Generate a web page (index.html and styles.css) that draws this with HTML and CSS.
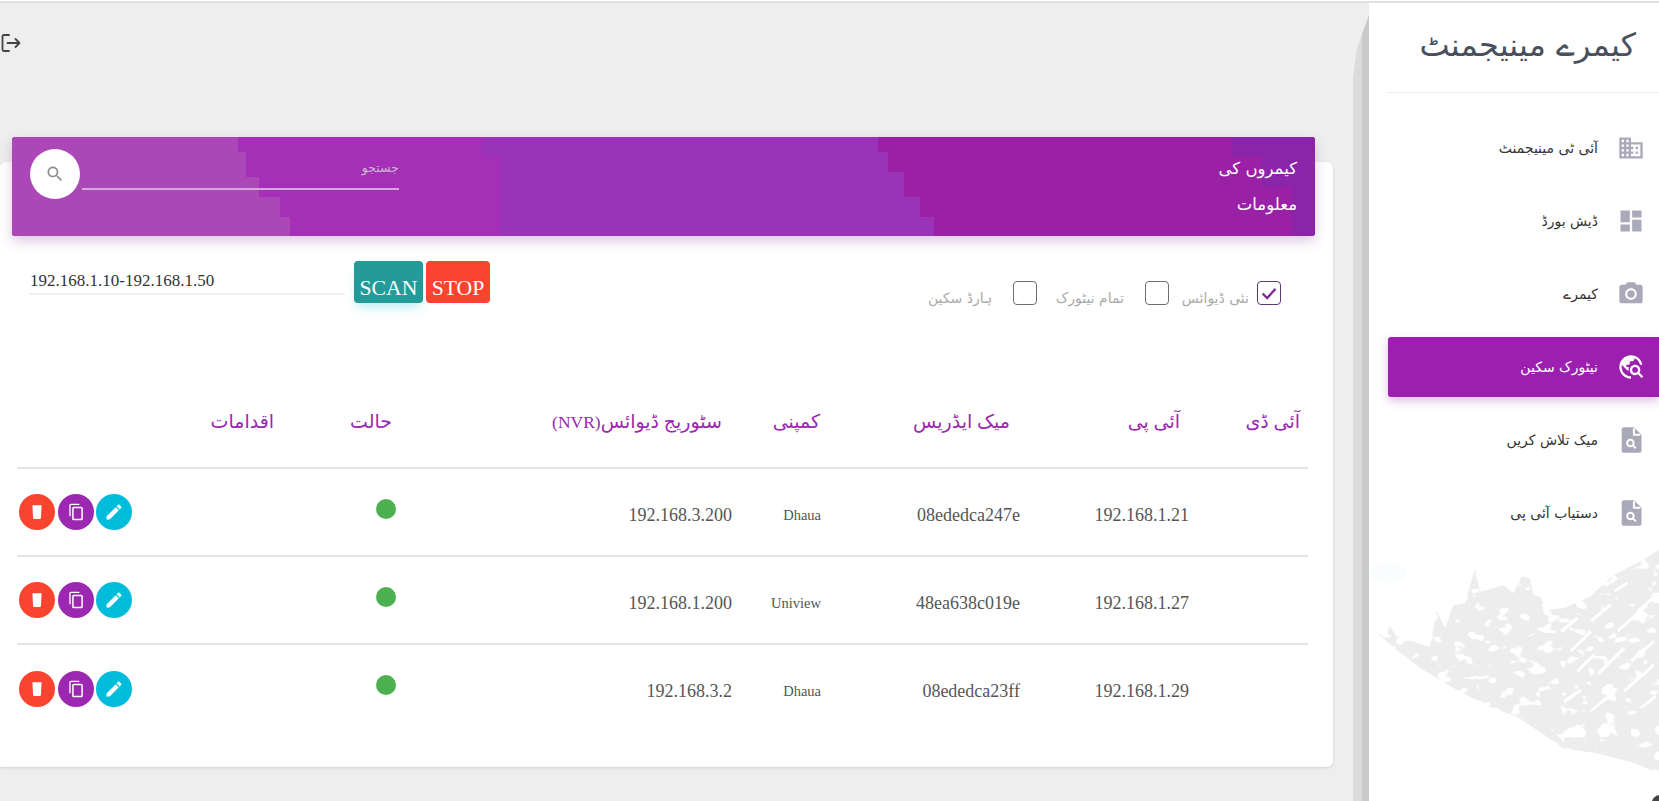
FILE: index.html
```html
<!DOCTYPE html>
<html lang="ur" dir="rtl">
<head>
<meta charset="utf-8">
<title>کیمرے مینیجمنٹ</title>
<link rel="stylesheet" href="styles.css">
</head>
<body>
<svg class="defs" width="0" height="0" aria-hidden="true">
  <filter id="speck" x="0" y="0" width="100%" height="100%">
    <feTurbulence type="fractalNoise" baseFrequency="0.022 0.032" numOctaves="2" seed="7"/>
    <feColorMatrix values="0 0 0 0 0  0 0 0 0 0  0 0 0 0 0  0 0 0 -14 9.400"/>
    <feComposite in="SourceGraphic" operator="in"/>
  </filter>
  <symbol id="i-del" viewBox="0 0 24 24"><path d="M6.500 4h11l-.8 15c0 .9-.6 1.500-1.400 1.500H8.700c-.8 0-1.400-.6-1.400-1.500z"/></symbol>
  <symbol id="i-copy" viewBox="0 0 24 24"><path d="M16 2H6c-1.100 0-2 .9-2 2v13h1.600V3.600H16V2zm2.200 3.600H9.400c-1.100 0-2 .9-2 2V20c0 1.100.9 2 2 2h8.800c1.100 0 2-.9 2-2V7.600c0-1.100-.9-2-2-2zm.2 14.600H9.200V7.400h9.200v12.800z"/></symbol>
  <symbol id="i-edit" viewBox="0 0 24 24"><path d="M3 17.250V21h3.750L17.810 9.940l-3.750-3.750L3 17.250zM20.710 7.040c.39-.39.39-1.020 0-1.410l-2.340-2.340c-.39-.39-1.020-.39-1.410 0l-1.830 1.830 3.750 3.750 1.830-1.830z"/></symbol>
  <symbol id="i-find" viewBox="0 0 24 24"><path class="doc" d="M6 1h8.500L21 7.500V21c0 1.100-.9 2-2 2H6c-1.100 0-2-.9-2-2V3c0-1.100.9-2 2-2z"/><path class="doc-cut" d="M14.500 2v5.500H20"/><circle class="doc-cut" cx="11.500" cy="14.500" r="2.800"/><path class="doc-cut" d="M13.600 16.600l2.600 2.600"/></symbol>
</svg>
<div class="app">
  <aside class="sidebar">
    <svg class="map" viewBox="117 0 870 783" aria-hidden="true">
      <ellipse class="map-tint" cx="175" cy="100" rx="55" ry="28"/>
      <path class="map-land" filter="url(#speck)" d="M120 260L165 295 180 258 200 290 250 305 300 320 320 210 345 265 370 195 405 190 435 85 450 155 490 145 520 135 550 160 575 110 600 115 610 165 630 170 650 210 700 205 780 170 850 105 920 70 987 30V700L900 665 800 640 700 625 620 570 560 530 480 500 380 450 280 390 200 330z"/>
      <g class="map-holes">
        <path d="M690 270l50-40 5 8-47 40zM720 330l60-60 6 7-60 60zM780 240l60-50 5 8-58 48zM850 150l40-25 5 8-40 24zM740 390l50-50 6 7-50 50zM700 480l50-34 5 8-50 34zM800 400l80-80 6 8-80 78zM860 270l90-80 5 8-90 78zM900 360l70-60 4 9-68 58zM780 510l50-42 5 8-50 40zM880 450l90-80 4 9-88 78zM920 210l50-42 4 8-50 40zM930 500l45-36 4 8-45 36zM700 575l25-15 25 8-14 26-30-4zM800 570l22-22 28 14-14 28-24 2z"/>
      </g>
      <circle class="map-dark" cx="990" cy="790" r="25"/>
    </svg>
    <h1 class="brand">کیمرے مینیجمنٹ</h1>
    <nav class="menu">
      <a class="item"><svg class="ico" viewBox="0 0 24 24"><path d="M12 7V3H2v18h20V7H12zM6 19H4v-2h2v2zm0-4H4v-2h2v2zm0-4H4V9h2v2zm0-4H4V5h2v2zm4 12H8v-2h2v2zm0-4H8v-2h2v2zm0-4H8V9h2v2zm0-4H8V5h2v2zm10 12h-8v-2h2v-2h-2v-2h2v-2h-2V9h8v10zm-2-8h-2v2h2v-2zm0 4h-2v2h2v-2z"/></svg><span>آئی ٹی مینیجمنٹ</span></a>
      <a class="item"><svg class="ico" viewBox="0 0 24 24"><path d="M3 13h8V3H3v10zm0 8h8v-6H3v6zm10 0h8V11h-8v10zm0-18v6h8V3h-8z"/></svg><span>ڈیش بورڈ</span></a>
      <a class="item"><svg class="ico" viewBox="0 0 24 24"><circle cx="12" cy="12" r="3.200"/><path d="M9 2L7.170 4H4c-1.100 0-2 .9-2 2v12c0 1.100.9 2 2 2h16c1.100 0 2-.9 2-2V6c0-1.100-.9-2-2-2h-3.170L15 2H9zm3 15c-2.760 0-5-2.240-5-5s2.240-5 5-5 5 2.240 5 5-2.240 5-5 5z"/></svg><span>کیمرے</span></a>
      <a class="item active"><svg class="ico" viewBox="0 0 24 24"><path d="M19.300 16.900c.4-.7.7-1.500.7-2.400 0-2.500-2-4.500-4.500-4.500S11 12 11 14.500s2 4.500 4.500 4.500c.9 0 1.700-.3 2.400-.7l3.200 3.200 1.400-1.400-3.200-3.200zm-3.800.1c-1.400 0-2.500-1.100-2.500-2.500s1.100-2.500 2.500-2.500 2.500 1.100 2.500 2.500-1.100 2.500-2.500 2.500zM12 20v2C6.480 22 2 17.520 2 12S6.480 2 12 2c4.840 0 8.870 3.440 9.800 8h-2.070c-.64-2.460-2.400-4.470-4.730-5.410V5c0 1.100-.9 2-2 2h-2v2c0 .55-.45 1-1 1H8v2h2v3H9l-4.790-4.790C4.080 10.790 4 11.380 4 12c0 4.410 3.590 8 8 8z"/></svg><span>نیٹورک سکین</span></a>
      <a class="item"><svg class="ico"><use href="#i-find"/></svg><span>میک تلاش کریں</span></a>
      <a class="item"><svg class="ico"><use href="#i-find"/></svg><span>دستیاب آئی پی</span></a>
    </nav>
  </aside>
  <div class="strip"></div>
  <main class="main">
    <div class="topbar">
      <svg class="logout" viewBox="0 0 22 20"><path d="M9 2H4C3 2 2.500 2.500 2.500 3.500v13c0 1 .5 1.500 1.500 1.500h5M7.500 10h12M15.500 6l4 4-4 4"/></svg>
    </div>
    <section class="card">
      <header class="card-head">
        <svg class="card-art" viewBox="0 0 1303 99" preserveAspectRatio="none" aria-hidden="true">
          <path class="art1" d="M0 0H226V15H234V40H247V60H268V80H278V99H0z"/>
          <path class="art2" d="M226 0H470V20H488V99H278V80H268V60H247V40H234V15H226z"/>
          <path class="art3" d="M470 0H866V15H876V35H892V60H908V80H922V99H488V20H470z"/>
          <path class="art4" d="M1220 0H1303V99H1280V50H1250V20H1220z"/>
        </svg>
        <h2 class="card-title">کیمروں کی<br>معلومات</h2>
        <div class="search">
          <div class="search-field">جستجو</div>
          <button class="search-btn" aria-label="search"><svg viewBox="0 0 24 24"><path d="M15.500 14h-.79l-.28-.27C15.410 12.590 16 11.110 16 9.500 16 5.910 13.090 3 9.500 3S3 5.910 3 9.500 5.910 16 9.500 16c1.610 0 3.090-.59 4.230-1.570l.27.28v.79l5 4.990L20.490 19l-4.990-5zm-6 0C7.010 14 5 11.990 5 9.500S7.010 5 9.500 5 14 7.010 14 9.500 11.990 14 9.500 14z"/></svg></button>
        </div>
      </header>
      <div class="controls">
        <div class="checks">
          <label class="check"><span class="box on"><svg viewBox="0 0 24 24"><path d="M5 12.500l5 5 9-10"/></svg></span><span>نئی ڈیوائس</span></label>
          <label class="check wide"><span class="box"></span><span>تمام نیٹورک</span></label>
          <label class="check wide"><span class="box"></span><span>ہارڈ سکین</span></label>
        </div>
        <div class="tools">
          <input class="range" dir="ltr" type="text" value="192.168.1.10-192.168.1.50">
          <button class="btn scan">SCAN</button>
          <button class="btn stop">STOP</button>
        </div>
      </div>
      <table class="grid">
        <colgroup>
          <col class="c-id"><col class="c-ip"><col class="c-mac"><col class="c-co"><col class="c-nvr"><col class="c-st"><col class="c-act">
        </colgroup>
        <thead>
          <tr><th>آئی ڈی</th><th class="p-ip">آئی پی</th><th class="p-mac">میک ایڈریس</th><th class="p-co">کمپنی</th><th class="p-nvr">سٹوریج ڈیوائس<span class="latin">(NVR)</span></th><th class="p-st">حالت</th><th class="p-act">اقدامات</th></tr>
        </thead>
        <tbody>
          <tr><td></td><td class="d-ip">192.168.1.21</td><td class="d-mac">08ededca247e</td><td class="d-co">Dhaua</td><td class="d-nvr">192.168.3.200</td><td class="d-st"><span class="dot"></span></td>
            <td><div class="actions"><span class="act del"><svg><use href="#i-del"/></svg></span><span class="act cpy"><svg><use href="#i-copy"/></svg></span><span class="act edt"><svg><use href="#i-edit"/></svg></span></div></td></tr>
          <tr><td></td><td class="d-ip">192.168.1.27</td><td class="d-mac">48ea638c019e</td><td class="d-co">Uniview</td><td class="d-nvr">192.168.1.200</td><td class="d-st"><span class="dot"></span></td>
            <td><div class="actions"><span class="act del"><svg><use href="#i-del"/></svg></span><span class="act cpy"><svg><use href="#i-copy"/></svg></span><span class="act edt"><svg><use href="#i-edit"/></svg></span></div></td></tr>
          <tr><td></td><td class="d-ip">192.168.1.29</td><td class="d-mac">08ededca23ff</td><td class="d-co">Dhaua</td><td class="d-nvr">192.168.3.2</td><td class="d-st"><span class="dot"></span></td>
            <td><div class="actions"><span class="act del"><svg><use href="#i-del"/></svg></span><span class="act cpy"><svg><use href="#i-copy"/></svg></span><span class="act edt"><svg><use href="#i-edit"/></svg></span></div></td></tr>
        </tbody>
      </table>
    </section>
  </main>
</div>
</body>
</html>
```
FILE: styles.css
```css
* { box-sizing: border-box; }
html, body { margin: 0; height: 100%; overflow: hidden; }
body { background: #fff; font-family: "Liberation Serif", "DejaVu Sans", serif; color: #444; }
.defs { position: absolute; }
.app { display: flex; height: 800px; margin-top: 1px; border-top: 2px solid #e0e0e0; background: #eee; overflow: hidden; }

/* sidebar */
.sidebar { position: relative; flex: 0 0 290px; background: #fff; overflow: hidden; }
.map { position: absolute; left: 0; bottom: 0; width: 290px; height: 261px; }
.map-land { fill: #ededed; }
.map-holes path { fill: #fff; }
.map-tint { fill: #f9fdfd; }
.map-dark { fill: #444; }
.brand { position: relative; margin: 0 0 0 19px; height: 90px; display: flex; align-items: center; padding: 0 23px 6px 0; border-bottom: 1px solid #e6efef; font-family: "DejaVu Sans", sans-serif; font-weight: 400; font-size: 32px; color: #47505c; white-space: nowrap; }
.menu { position: relative; display: flex; flex-direction: column; gap: 13px; margin: 25px 0 0 19px; }
.item { display: flex; align-items: center; gap: 19px; height: 60px; padding-right: 14px; border-radius: 3px 0 0 3px; font-family: "DejaVu Sans", sans-serif; font-size: 14px; color: #333; }
.ico { flex: none; width: 28px; height: 28px; fill: #a9a9b9; }
.doc { fill: #a9a9b9; }
.doc-cut { fill: none; stroke: #fff; stroke-width: 1.700; }
.active { background: #9c1fb0; color: #fff; box-shadow: 0 4px 10px rgba(156, 39, 176, .3); }
.active .ico { fill: #fff; }

/* strip between sidebar and content */
.strip { flex: 0 0 16px; background: linear-gradient(to left, #c9c9c9 0 7px, #dcdcdc 7px); clip-path: polygon(100% 12px, 100% 100%, 0 100%, 0 75px, 4px 45px); }

/* main */
.main { flex: 1; min-width: 0; }
.topbar { display: flex; justify-content: flex-end; height: 159px; padding-top: 30px; }
.logout { width: 22px; height: 20px; fill: none; stroke: #444; stroke-width: 1.800; stroke-linecap: round; stroke-linejoin: round; }
.card { display: flow-root; height: 605px; margin-right: 20px; background: #fff; border-radius: 6px 6px 6px 0; box-shadow: 0 1px 3px rgba(0, 0, 0, .12); }

.card-head { position: relative; display: flex; justify-content: space-between; align-items: flex-start; height: 99px; margin: -25px 18px 0 12px; padding: 12px 18px 0 18px; border-radius: 3px; background: #9a20a6; color: #fff; box-shadow: 0 5px 12px rgba(120, 40, 140, .25); overflow: hidden; }
.card-art { position: absolute; inset: 0; width: 100%; height: 100%; }
.art1 { fill: #ab47b7; }
.art2 { fill: #a52fb7; }
.art3 { fill: #9b33b8; }
.art4 { fill: #8a24a8; }
.card-title { position: relative; margin: 2px 0 0; font-family: "DejaVu Sans", sans-serif; font-weight: 400; font-size: 16.500px; line-height: 36px; }
.search { position: relative; display: flex; align-items: flex-start; gap: 2px; }
.search-field { width: 317px; height: 41px; padding-top: 11px; border-bottom: 2px solid #d8a6e0; font-family: "DejaVu Sans", sans-serif; font-size: 12.500px; color: #c9b8cc; }
.search-btn { display: flex; align-items: center; justify-content: center; width: 50px; height: 50px; padding: 0; border: 0; border-radius: 50%; background: #fff; }
.search-btn svg { width: 20px; height: 20px; fill: #8f8f8f; }

.controls { display: flex; justify-content: space-between; align-items: flex-start; height: 152px; padding: 0 52px 0 0; }
.checks { display: grid; grid-template-columns: 112px 132px auto; padding-top: 45px; }
.check { display: flex; align-items: flex-start; gap: 8px; font-family: "DejaVu Sans", sans-serif; font-size: 14px; color: #aaa; }
.wide { gap: 21px; }
.check span:last-child { padding-top: 9px; }
.box { display: block; flex: none; width: 24px; height: 24px; border: 1.500px solid #6f6f6f; border-radius: 4px; }
.box.on { border-color: #5d3a72; }
.box svg { display: block; width: 100%; height: 100%; fill: none; stroke: #7b2d8e; stroke-width: 2.500; }
.tools { display: flex; direction: ltr; gap: 3px; padding: 25px 0 0 30px; }
.range { width: 315px; height: 34px; margin: 0 6px 0 0; padding: 7px 0 0; border: 0; border-bottom: 2px solid #eee; outline: 0; font: 17px "Liberation Serif", serif; color: #333; background: none; }
.btn { width: 69px; height: 42px; padding: 12px 0 0; border: 0; border-radius: 4px; font: 21.700px "Liberation Serif", serif; color: #fff; }
.scan { background: #239b99; box-shadow: 0 8px 12px -4px rgba(38, 198, 218, .35); }
.stop { width: 64px; background: #fb4430; }

/* table */
.grid { width: 1291px; margin: 0 25px 0 0; border-collapse: collapse; table-layout: fixed; }
.c-id { width: 108px; }
.c-ip { width: 170px; }
.c-mac { width: 200px; }
.c-co { width: 90px; }
.c-nvr { width: 340px; }
.c-st { width: 120px; }
.c-act { width: 263px; }
th { height: 80px; padding: 0 8px 12px 0; border-bottom: 2px solid #e5e5e5; text-align: right; font-family: "Liberation Serif", "DejaVu Sans", serif; font-weight: 400; font-size: 19px; color: #9c27b0; }
.latin { font-size: 17.500px; }
.p-ip, .p-mac { padding-right: 20px; }
.p-co { padding-right: 10px; }
.p-nvr { padding-right: 18px; }
.p-act { padding-right: 6px; }
td { height: 88px; padding: 6px 8px 0 0; border-bottom: 2px solid #e5e5e5; text-align: right; font-size: 18px; color: #555; }
tbody tr:last-child td { border-bottom: 0; }
.d-ip { padding-right: 11px; }
.d-mac { padding-right: 10px; }
.d-co { padding-right: 9px; font-size: 14.500px; }
.d-st { padding: 0 4px 8px 0; }
.dot { display: inline-block; width: 20px; height: 20px; border-radius: 50%; background: #4caf50; vertical-align: middle; }
.actions { display: flex; direction: ltr; gap: 2.500px; padding: 0 0 6px 2px; }
.act { display: flex; align-items: center; justify-content: center; width: 36px; height: 36px; border-radius: 50%; }
.act svg { width: 20px; height: 20px; fill: #fff; }
.del { background: #fb4430; }
.cpy { background: #9c27b0; }
.edt { background: #00bcdc; }
```
